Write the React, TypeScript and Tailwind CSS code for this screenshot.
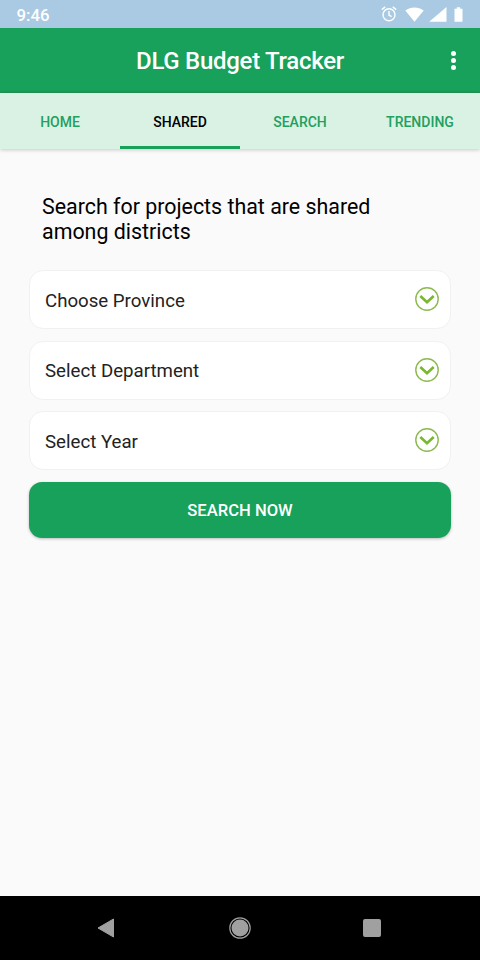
import React from "react";

function StatusBar() {
  return (
    <div className="flex h-7 shrink-0 items-center bg-[#a9cae2] pr-[17px] pl-[16.5px] text-white">
      <span className="pt-0.5 text-[16.8px] leading-none font-medium">9:46</span>
      <div className="ml-auto flex items-center">
        <svg className="h-4 w-4" viewBox="0 0 16 16" fill="none" stroke="white" strokeWidth="1.4">
          <circle cx="8" cy="8.7" r="6" />
          <path d="M8 5v4.1l2.6 1.6M.8 3.6 4.2.9M15.2 3.6 11.8.9" />
        </svg>
        <svg className="ml-2 h-[15px] w-[19px]" viewBox="0 0 19 15" fill="white">
          <path d="M.3 3.6C5.8-.6 13.2-.6 18.7 3.6L9.5 14.8Z" />
        </svg>
        <svg className="ml-[5px] h-[15px] w-[18px]" viewBox="0 0 18 15" fill="white">
          <path d="M17.5 0v14.7H.2Z" />
        </svg>
        <svg className="ml-[7px] h-[15px] w-[9px]" viewBox="0 0 9 15" fill="white">
          <path d="M2.8.2h3.4v1.6h2.3v13H.5v-13h2.3Z" />
        </svg>
      </div>
    </div>
  );
}

function AppBar() {
  return (
    <header className="grid h-[65px] shrink-0 grid-cols-[1fr_auto_1fr] items-center border-b-2 border-[#229656] bg-[#17a15a] text-white">
      <span />
      <h1 className="pt-[3px] text-[24px] leading-none font-medium tracking-[-0.28px]">DLG Budget Tracker</h1>
      <button className="mr-[24px] grid gap-[2px] justify-self-end pt-px" aria-label="More options">
        <span className="h-[5px] w-[5px] rounded-full bg-white" />
        <span className="h-[5px] w-[5px] rounded-full bg-white" />
        <span className="h-[5px] w-[5px] rounded-full bg-white" />
      </button>
    </header>
  );
}

const tabs = ["HOME", "SHARED", "SEARCH", "TRENDING"];

function Tabs() {
  return (
    <nav className="grid h-[56px] shrink-0 grid-cols-4 bg-[#d9f2e4] text-[14px] font-medium shadow-[0_1px_4px_rgba(0,0,0,0.2)]">
      {tabs.map((tab) => (
        <button
          key={tab}
          className={
            tab === "SHARED"
              ? "border-b-[3px] border-[#17a15a] pt-[6px] text-black"
              : "border-b-[3px] border-transparent pt-[6px] text-[#22a060]"
          }
        >
          {tab}
        </button>
      ))}
    </nav>
  );
}

function SelectField({ label }: { label: string }) {
  return (
    <button className="flex h-[59px] w-full items-center justify-between rounded-[14px] border border-[#f1f1f1] bg-white pr-[11px] pl-[15px] text-left text-[18.67px] text-[#222]">
      <span className="pt-[2px]">{label}</span>
      <svg className="mb-px h-6 w-6" viewBox="0 0 24 24" fill="none">
        <circle cx="12" cy="12" r="11.2" stroke="#8dba50" strokeWidth="1.4" />
        <path d="M5.3 9 12 15.2 18.7 9" stroke="#77b82c" strokeWidth="2.6" />
      </svg>
    </button>
  );
}

function NavigationBar() {
  return (
    <div className="grid h-16 shrink-0 grid-cols-[1fr_auto_1fr] items-center bg-black pr-[99px] pl-[97px]">
      <svg className="h-[20px] w-[18px]" viewBox="0 0 18 20">
        <path d="M1 10 16.5 1v18Z" fill="#a0a0a0" stroke="#a0a0a0" strokeLinejoin="round" />
      </svg>
      <svg className="ml-[2px] h-[22px] w-[22px]" viewBox="0 0 22 22">
        <circle cx="11" cy="11" r="10.2" fill="none" stroke="#a0a0a0" strokeWidth="1.2" />
        <circle cx="11" cy="11" r="8.5" fill="#a0a0a0" />
      </svg>
      <span className="h-[18px] w-[18px] justify-self-end rounded-[2px] bg-[#a0a0a0]" />
    </div>
  );
}

export default function App() {
  return (
    <div className="flex h-[960px] w-[480px] flex-col bg-[#fafafa] font-[Roboto,'Noto_Sans',sans-serif]">
      <StatusBar />
      <AppBar />
      <Tabs />
      <main className="flex-1 px-[29px] pt-[45px]">
        <h2 className="ml-[13px] text-[21.4px] leading-[25px] text-black">
          Search for projects that are shared
          <br />
          among districts
        </h2>
        <div className="mt-[26px] flex flex-col gap-[11.7px]">
          <SelectField label="Choose Province" />
          <SelectField label="Select Department" />
          <SelectField label="Select Year" />
          <button className="h-[56px] w-full rounded-[13px] bg-[#17a15a] pt-[3px] text-[16.6px] font-medium text-white shadow-[0_1px_3px_rgba(0,0,0,0.25)]">
            SEARCH NOW
          </button>
        </div>
      </main>
      <NavigationBar />
    </div>
  );
}
